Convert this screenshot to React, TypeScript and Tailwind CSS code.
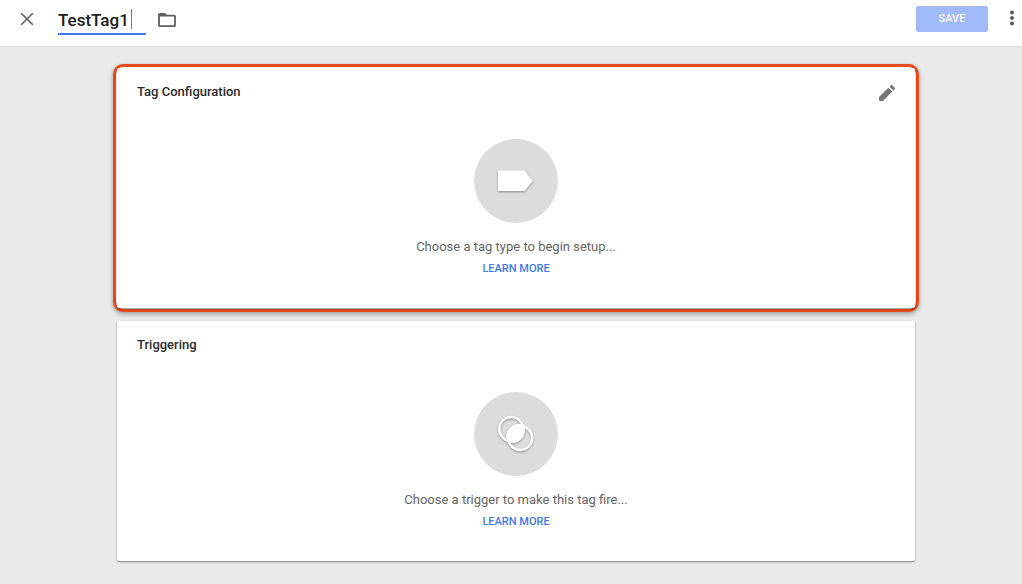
import React, { useState } from "react";

function CloseIcon() {
  return (
    <svg viewBox="0 0 14 14" className="size-[14px]" fill="none" stroke="#5f5f5f" strokeWidth="1.6" aria-hidden="true">
      <path d="M1.2 1.2 12.8 12.8M12.8 1.2 1.2 12.8" />
    </svg>
  );
}

function FolderIcon() {
  return (
    <svg viewBox="0 0 18 14" className="h-[14px] w-[18px]" fill="#5f5f5f" aria-hidden="true">
      <path
        fillRule="evenodd"
        d="M1.9 0h5.2l1.8 1.7h7.2c1 0 1.8.8 1.8 1.8v8.7c0 1-.8 1.8-1.8 1.8H1.9C.9 14 .1 13.200.1 12.200V1.800C.1.800.9 0 1.900 0Zm0 3.500v8.700h14.200V3.500Z"
      />
    </svg>
  );
}

function MoreIcon() {
  return (
    <svg viewBox="0 0 4 16" className="h-4 w-1" fill="#555" aria-hidden="true">
      <circle cx="2" cy="2.500" r="1.900" />
      <circle cx="2" cy="8" r="1.900" />
      <circle cx="2" cy="13.500" r="1.900" />
    </svg>
  );
}

function PencilIcon() {
  return (
    <svg viewBox="3 3 18 18" className="size-4" fill="#757575" aria-hidden="true">
      <path d="M3.600 16 13.600 6l4.400 4.400L8 20.400Q7.400 21 6.600 21H4Q3 21 3 20V17.400Q3 16.600 3.600 16ZM20.600 7.800c.5-.5.5-1.200 0-1.700l-2.700-2.700c-.5-.5-1.200-.5-1.700 0l-1.400 1.400 4.400 4.400z" />
    </svg>
  );
}

function TagIcon() {
  return (
    <svg viewBox="0 0 84 84" className="size-[84px]" aria-hidden="true">
      <circle cx="42" cy="42" r="42" fill="#dcdcdc" />
      <path d="M24 31.500H50.500L59 42 50.500 52H24Z" fill="#fff" className="drop-shadow-[0_1px_1px_rgba(0,0,0,0.4)]" />
    </svg>
  );
}

function TriggerIcon() {
  return (
    <svg viewBox="0 0 84 84" className="size-[84px]" aria-hidden="true">
      <circle cx="42" cy="42" r="42" fill="#dcdcdc" />
      <g className="drop-shadow-[0_1px_1px_rgba(0,0,0,0.35)]">
        <g fill="none" stroke="#fff" strokeWidth="2.500">
          <circle cx="37.200" cy="37" r="12" />
          <circle cx="46.200" cy="46" r="12" />
        </g>
        <ellipse cx="41.700" cy="41.500" rx="11" ry="8" transform="rotate(-45 41.700 41.500)" fill="#fff" />
      </g>
    </svg>
  );
}

type PanelProps = {
  title: string;
  icon: React.ReactNode;
  message: string;
  action?: React.ReactNode;
};

function Panel({ title, icon, message, action }: PanelProps) {
  return (
    <section className="rounded-[2px] bg-white pb-[29px] shadow-[0_1px_2px_rgba(0,0,0,0.45)]">
      <div className="flex h-12 items-center justify-between px-5">
        <h2 className="text-[13px] leading-5 font-medium text-[#2b2b2b]">{title}</h2>
        {action}
      </div>
      <div className="flex flex-col items-center pt-[23px]">
        {icon}
        <p className="mt-[14px] text-[13px] leading-5 text-[#666]">{message}</p>
        <a href="#learn-more" className="mt-[2px] text-[11px] leading-5 font-medium text-[#4179f0]">
          LEARN MORE
        </a>
      </div>
    </section>
  );
}

export default function App() {
  const [name, setName] = useState("TestTag1");
  return (
    <div className="flex min-h-screen flex-col bg-[#eaeaea] font-['Roboto',sans-serif]">
      <header className="flex h-[47px] items-start border-b border-[#dedede] bg-white pr-2 pl-5">
        <button type="button" aria-label="Close" className="mt-3">
          <CloseIcon />
        </button>
        <div className="relative ml-6">
          <input
            aria-label="Tag name"
            value={name}
            onChange={(e) => setName(e.target.value)}
            className="block h-[35px] w-[88px] border-b-2 border-[#4179f0] pt-1.5 text-[17px] leading-6 font-medium text-[#1c1c1c] outline-none"
          />
          <span className="absolute top-[9px] left-[73px] h-5 w-px bg-[#777]" />
        </div>
        <button type="button" aria-label="Choose folder" className="mt-[13px] ml-3">
          <FolderIcon />
        </button>
        <button
          type="button"
          className="mt-[6px] ml-auto h-[26px] w-[72px] rounded-[2px] bg-[#a0b9f8] text-[11px] font-medium text-white"
        >
          SAVE
        </button>
        <button type="button" aria-label="More options" className="mt-[10px] ml-[22px]">
          <MoreIcon />
        </button>
      </header>
      <main className="flex flex-col gap-[9px] pt-[17px] pr-[103px] pb-5 pl-[113px]">
        <div className="rounded-[10px] border-3 border-[#e64a19] bg-white p-px shadow-[0_2px_5px_rgba(0,0,0,0.35)]">
          <Panel
            title="Tag Configuration"
            icon={<TagIcon />}
            message="Choose a tag type to begin setup..."
            action={
              <button type="button" aria-label="Edit tag configuration" className="mt-px">
                <PencilIcon />
              </button>
            }
          />
        </div>
        <div className="px-1">
          <Panel title="Triggering" icon={<TriggerIcon />} message="Choose a trigger to make this tag fire..." />
        </div>
      </main>
    </div>
  );
}
